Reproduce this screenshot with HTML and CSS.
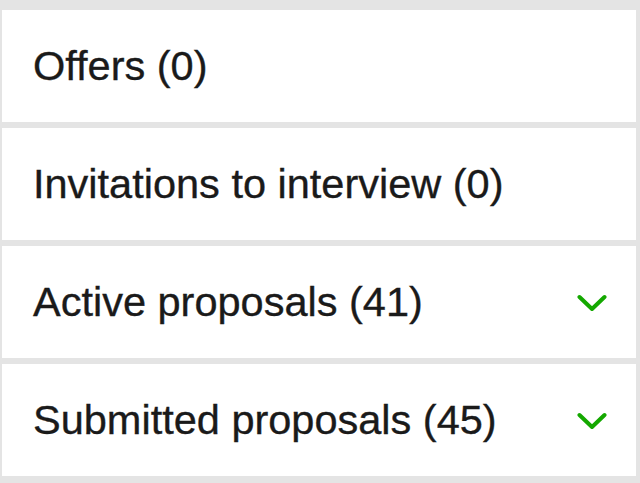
FILE: index.html
```html
<!DOCTYPE html>
<html>
<head>
<meta charset="utf-8">
<link rel="stylesheet" href="styles.css">
</head>
<body>
<div class="list">
  <div class="item"><span class="label">Offers (0)</span></div>
  <div class="item"><span class="label">Invitations to interview (0)</span></div>
  <div class="item"><span class="label">Active proposals (41)</span>
    <svg class="chev" width="30" height="18" viewBox="0 0 30 18"><path d="M2.5 3 L15 15 L27.5 3" fill="none" stroke="#14a800" stroke-width="4" stroke-linecap="round" stroke-linejoin="round"/></svg>
  </div>
  <div class="item"><span class="label">Submitted proposals (45)</span>
    <svg class="chev" width="30" height="18" viewBox="0 0 30 18"><path d="M2.5 3 L15 15 L27.5 3" fill="none" stroke="#14a800" stroke-width="4" stroke-linecap="round" stroke-linejoin="round"/></svg>
  </div>
</div>
</body>
</html>
```

FILE: styles.css
```css
html, body {
  margin: 0;
  padding: 0;
  background: #e4e4e4;
}
body {
  font-family: "Liberation Sans", Arial, sans-serif;
  color: #1a1a1a;
}
.list {
  display: flex;
  flex-direction: column;
  gap: 6px;
  padding: 10px 4px 0 2px;
}
.item {
  background: #fff;
  height: 112px;
  display: flex;
  align-items: center;
  justify-content: space-between;
  padding: 0 29px 0 31px;
  box-sizing: border-box;
}
.label {
  font-size: 41.5px;
  -webkit-text-stroke: 0.35px #1a1a1a;
}
.chev {
  display: block;
  margin-top: 2px;
}
```
